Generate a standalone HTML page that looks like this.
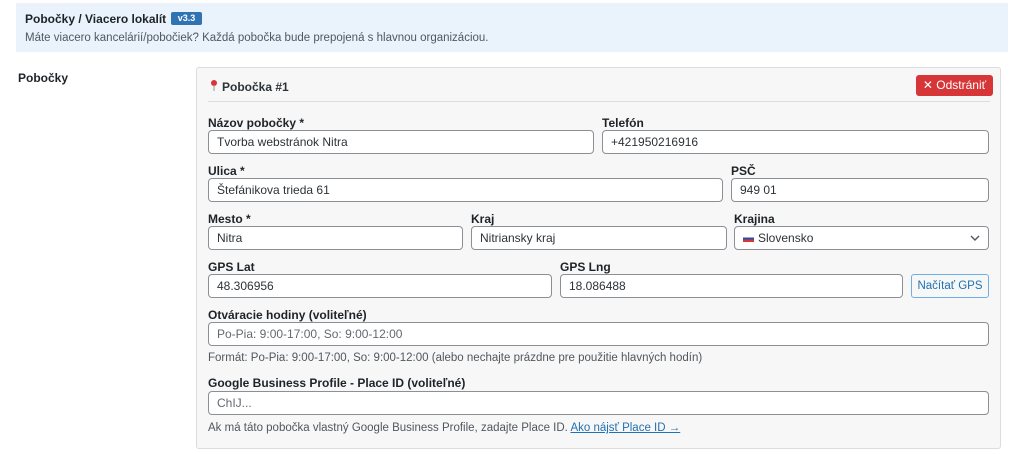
<!DOCTYPE html>
<html><head><meta charset="utf-8"><style>
*{box-sizing:border-box;margin:0;padding:0}
body{width:1024px;height:454px;background:#fff;font-family:"Liberation Sans",sans-serif;color:#1d2327;position:relative;overflow:hidden;font-size:12px}
.a{position:absolute}
.banner{left:16px;top:3px;width:992px;height:49px;background:#eaf3fb}
.t{font-weight:bold;font-size:12px}
.lbl{font-weight:bold;font-size:12px;color:#1d2327}
.in{position:absolute;height:24px;border:1px solid #8c8f94;border-radius:4px;background:#fff;font-size:12px;padding:0 8px;line-height:22px;color:#2c3338}
.ph{color:#646970}
.help{font-size:11.5px;color:#50575e}
</style></head><body>
<div class="a banner"></div>
<div class="a t" style="left:25px;top:12px">Pobočky / Viacero lokalít</div>
<div class="a" style="left:171px;top:12px;width:31px;height:13px;background:#2f73b3;color:#fff;font-size:9px;font-weight:bold;text-align:center;line-height:13px;border-radius:2px">v3.3</div>
<div class="a help" style="left:25px;top:32px;color:#50575e">Máte viacero kancelárií/pobočiek? Každá pobočka bude prepojená s hlavnou organizáciou.</div>
<div class="a t" style="left:18px;top:71px">Pobočky</div>
<div class="a" style="left:196px;top:67px;width:805px;height:382px;background:#f7f7f7;border:1px solid #dcdcde;border-radius:3px"></div>
<div class="a" style="left:210px;top:80px;width:8px;height:12px"><svg width="8" height="12"><circle cx="4" cy="3" r="3" fill="#d63638"/><line x1="4" y1="5" x2="4" y2="11" stroke="#999" stroke-width="1"/></svg></div>
<div class="a t" style="left:222px;top:80px;color:#2c3338">Pobočka #1</div>
<div class="a" style="left:916px;top:75px;width:77px;height:21px;background:#d63638;border-radius:3px;color:#fff;font-size:12px;line-height:21px;text-align:center">✕ Odstrániť</div>
<div class="a" style="left:208px;top:101px;width:782px;height:1px;background:#dcdcde"></div>

<div class="a lbl" style="left:208px;top:116px">Názov pobočky *</div>
<div class="a lbl" style="left:602px;top:116px">Telefón</div>
<div class="in" style="left:208px;top:130px;width:386px">Tvorba webstránok Nitra</div>
<div class="in" style="left:602px;top:130px;width:387px">+421950216916</div>

<div class="a lbl" style="left:208px;top:164px">Ulica *</div>
<div class="a lbl" style="left:731px;top:164px">PSČ</div>
<div class="in" style="left:208px;top:178px;width:515px">Štefánikova trieda 61</div>
<div class="in" style="left:731px;top:178px;width:258px">949 01</div>

<div class="a lbl" style="left:208px;top:212px">Mesto *</div>
<div class="a lbl" style="left:471px;top:212px">Kraj</div>
<div class="a lbl" style="left:734px;top:212px">Krajina</div>
<div class="in" style="left:208px;top:226px;width:255px">Nitra</div>
<div class="in" style="left:471px;top:226px;width:256px">Nitriansky kraj</div>
<div class="in" style="left:734px;top:226px;width:255px"><span style="display:inline-block;width:11px;height:7px;background:linear-gradient(#fff 33%,#2350a8 33%,#2350a8 66%,#d63638 66%);vertical-align:middle;margin-right:4px"></span>Slovensko<svg style="position:absolute;right:8px;top:8px" width="10" height="7"><path d="M1 1l4 4 4-4" fill="none" stroke="#50575e" stroke-width="1.4"/></svg></div>

<div class="a lbl" style="left:208px;top:260px">GPS Lat</div>
<div class="a lbl" style="left:560px;top:260px">GPS Lng</div>
<div class="in" style="left:208px;top:274px;width:344px">48.306956</div>
<div class="in" style="left:560px;top:274px;width:343px">18.086488</div>
<div class="a" style="left:911px;top:274px;width:78px;height:24px;border:1px solid #72aee6;border-radius:3px;background:#f6f7f7;color:#2271b1;font-size:11.5px;line-height:22px;text-align:center">Načítať GPS</div>

<div class="a lbl" style="left:208px;top:308px">Otváracie hodiny (voliteľné)</div>
<div class="in ph" style="left:208px;top:322px;width:781px">Po-Pia: 9:00-17:00, So: 9:00-12:00</div>
<div class="a help" style="left:208px;top:352px">Formát: Po-Pia: 9:00-17:00, So: 9:00-12:00 (alebo nechajte prázdne pre použitie hlavných hodín)</div>

<div class="a lbl" style="left:208px;top:376px">Google Business Profile - Place ID (voliteľné)</div>
<div class="in ph" style="left:208px;top:391px;width:781px">ChIJ...</div>
<div class="a help" style="left:208px;top:422px">Ak má táto pobočka vlastný Google Business Profile, zadajte Place ID. <span style="color:#2271b1;text-decoration:underline">Ako nájsť Place ID →</span></div>
</body></html>
